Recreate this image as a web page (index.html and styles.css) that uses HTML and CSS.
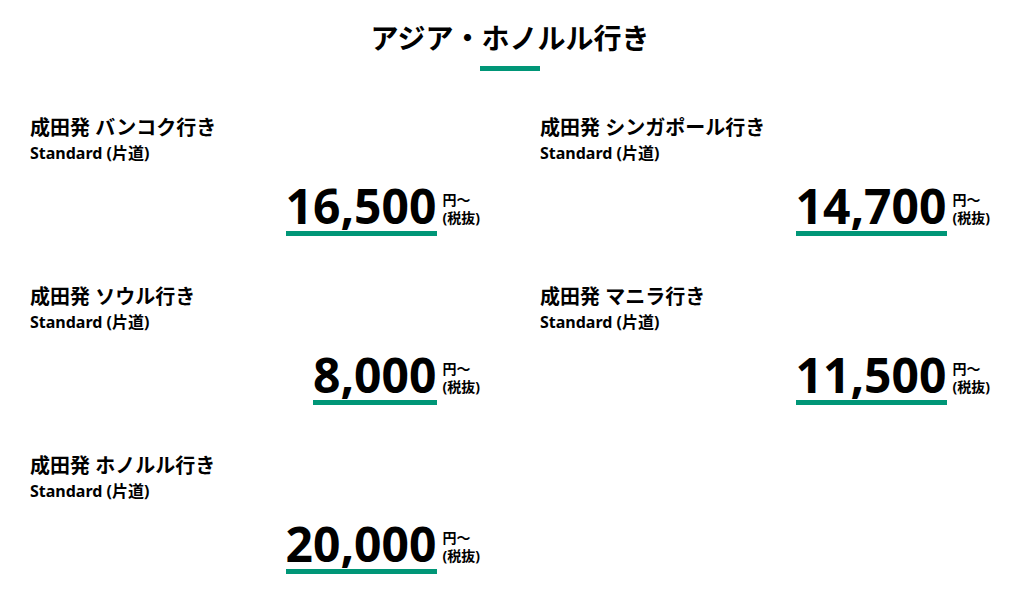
FILE: index.html
```html
<!DOCTYPE html>
<html lang="ja">
<head>
<meta charset="utf-8">
<link rel="stylesheet" href="styles.css">
</head>
<body>
<section class="fares">
  <h2 class="fares__title">アジア・ホノルル行き</h2>
  <div class="fares__grid">
    <div class="fare">
      <h3 class="fare__route">成田発 バンコク行き</h3>
      <p class="fare__class">Standard (片道)</p>
      <div class="fare__price"><span class="fare__amount">16,500</span><span class="fare__unit">円～<br>(税抜)</span></div>
    </div>
    <div class="fare">
      <h3 class="fare__route">成田発 シンガポール行き</h3>
      <p class="fare__class">Standard (片道)</p>
      <div class="fare__price"><span class="fare__amount">14,700</span><span class="fare__unit">円～<br>(税抜)</span></div>
    </div>
    <div class="fare">
      <h3 class="fare__route">成田発 ソウル行き</h3>
      <p class="fare__class">Standard (片道)</p>
      <div class="fare__price"><span class="fare__amount">8,000</span><span class="fare__unit">円～<br>(税抜)</span></div>
    </div>
    <div class="fare">
      <h3 class="fare__route">成田発 マニラ行き</h3>
      <p class="fare__class">Standard (片道)</p>
      <div class="fare__price"><span class="fare__amount">11,500</span><span class="fare__unit">円～<br>(税抜)</span></div>
    </div>
    <div class="fare">
      <h3 class="fare__route">成田発 ホノルル行き</h3>
      <p class="fare__class">Standard (片道)</p>
      <div class="fare__price"><span class="fare__amount">20,000</span><span class="fare__unit">円～<br>(税抜)</span></div>
    </div>
  </div>
</section>
</body>
</html>
```
FILE: styles.css
```css
* { box-sizing: border-box; }
body {
  margin: 0;
  background: #fff;
  color: #000;
  font-family: "Noto Sans", "Noto Sans CJK JP", sans-serif;
}
.fares {
  padding-top: 18px;
}
.fares__title {
  margin: 0;
  font-size: 28px;
  font-weight: 700;
  line-height: 40px;
  text-align: center;
}
.fares__title::after {
  content: "";
  display: block;
  width: 60px;
  height: 5px;
  background: #009677;
  margin: 8px auto 0;
}
.fares__grid {
  display: grid;
  grid-template-columns: 460px 460px;
  column-gap: 50px;
  row-gap: 47px;
  margin-top: 43px;
  padding-left: 30px;
}
.fare {
  padding-right: 10px;
}
.fare__route {
  margin: 0;
  font-size: 20px;
  font-weight: 700;
  line-height: 28px;
}
.fare__class {
  margin: 0;
  font-size: 16px;
  font-weight: 700;
  line-height: 22px;
}
.fare__price {
  display: flex;
  justify-content: flex-end;
  align-items: flex-start;
  gap: 6px;
  margin-top: 17px;
}
.fare__amount {
  font-size: 48px;
  font-weight: 700;
  line-height: 50px;
  border-bottom: 5px solid #009677;
}
.fare__unit {
  font-size: 14px;
  font-weight: 700;
  line-height: 18px;
  margin-top: 10px;
}
```
